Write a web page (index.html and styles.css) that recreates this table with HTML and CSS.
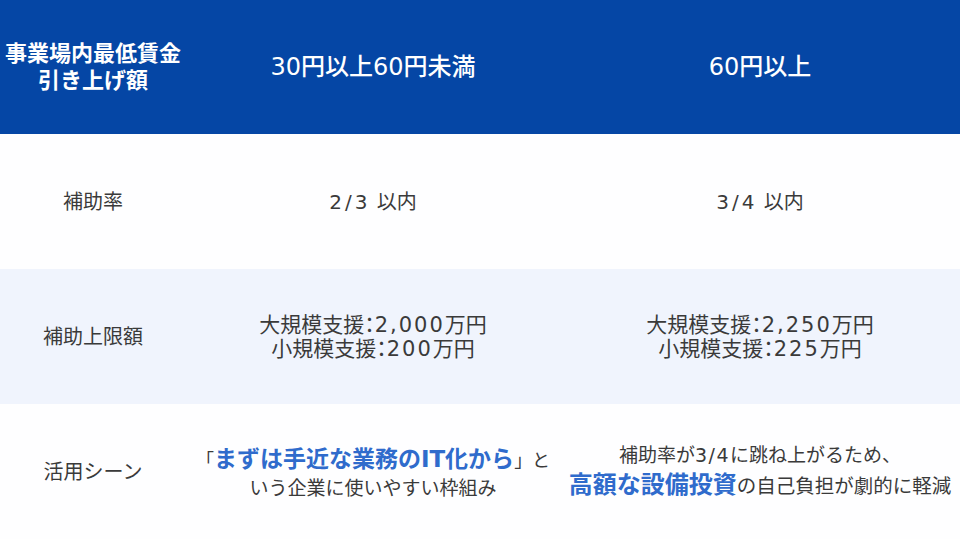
FILE: index.html
```html
<!DOCTYPE html>
<html lang="ja">
<head>
<meta charset="utf-8">
<link rel="stylesheet" href="styles.css">
</head>
<body>
<div class="table">
  <div class="row head">
    <div class="cell c1">事業場内最低賃金<br>引き上げ額</div>
    <div class="cell c2">30円以上60円未満</div>
    <div class="cell c3">60円以上</div>
  </div>
  <div class="row rate">
    <div class="cell c1">補助率</div>
    <div class="cell c2"><span><span class="n">2/3</span> 以内</span></div>
    <div class="cell c3"><span><span class="n">3/4</span> 以内</span></div>
  </div>
  <div class="row alt">
    <div class="cell c1">補助上限額</div>
    <div class="cell c2"><span>大規模支援：<span class="n">2,000</span>万円</span><span>小規模支援：<span class="n">200</span>万円</span></div>
    <div class="cell c3"><span>大規模支援：<span class="n">2,250</span>万円</span><span>小規模支援：<span class="n">225</span>万円</span></div>
  </div>
  <div class="row scene">
    <div class="cell c1">活用シーン</div>
    <div class="cell c2"><span class="l1">「<span class="hl">まずは手近な業務のIT化から</span>」と</span><span class="l2">いう企業に使いやすい枠組み</span></div>
    <div class="cell c3"><span class="r1">補助率が<span class="n n2">3/4</span>に跳ね上がるため、</span><span class="r2"><span class="hl2">高額な設備投資</span>の自己負担が劇的に軽減</span></div>
  </div>
</div>
</body>
</html>
```
FILE: styles.css
```css
html, body {
  margin: 0;
  padding: 0;
  background: #ffffff;
}
body {
  width: 960px;
  height: 540px;
  overflow: hidden;
  font-family: "DejaVu Sans", "Noto Sans CJK JP", sans-serif;
  color: #3a3a3a;
}
.table {
  display: flex;
  flex-direction: column;
}
.row {
  display: grid;
  grid-template-columns: 186px 374px 400px;
  height: 135px;
  background: #fefeff;
}
.row.head {
  height: 134px;
  background: #0546a5;
  color: #ffffff;
  font-weight: 700;
}
.row.alt {
  background: #f0f4fd;
}
.cell {
  display: flex;
  flex-direction: column;
  align-items: center;
  justify-content: center;
  text-align: center;
  font-size: 20px;
  line-height: 24px;
}
.head .c1 {
  font-size: 22px;
  line-height: 27px;
}
.head .c2, .head .c3 {
  font-size: 24px;
  font-weight: 500;
}
.n {
  letter-spacing: 3px;
}
.alt .c2, .alt .c3 {
  font-size: 21px;
  line-height: 24px;
  font-feature-settings: "palt";
}
.alt .n {
  letter-spacing: 2px;
}
.l1 {
  font-size: 18px;
  line-height: 30px;
}
.hl {
  color: #2f6bcc;
  font-weight: 700;
  font-size: 23px;
}
.hl2 {
  color: #2f6bcc;
  font-weight: 700;
  font-size: 24px;
}
.l2 {
  font-size: 19px;
  line-height: 24px;
}
.r1 {
  font-size: 19px;
  line-height: 26px;
  margin-bottom: 2px;
}
.n2 {
  letter-spacing: 1.5px;
}
.r2 {
  font-size: 19.5px;
  line-height: 30px;
}
```
